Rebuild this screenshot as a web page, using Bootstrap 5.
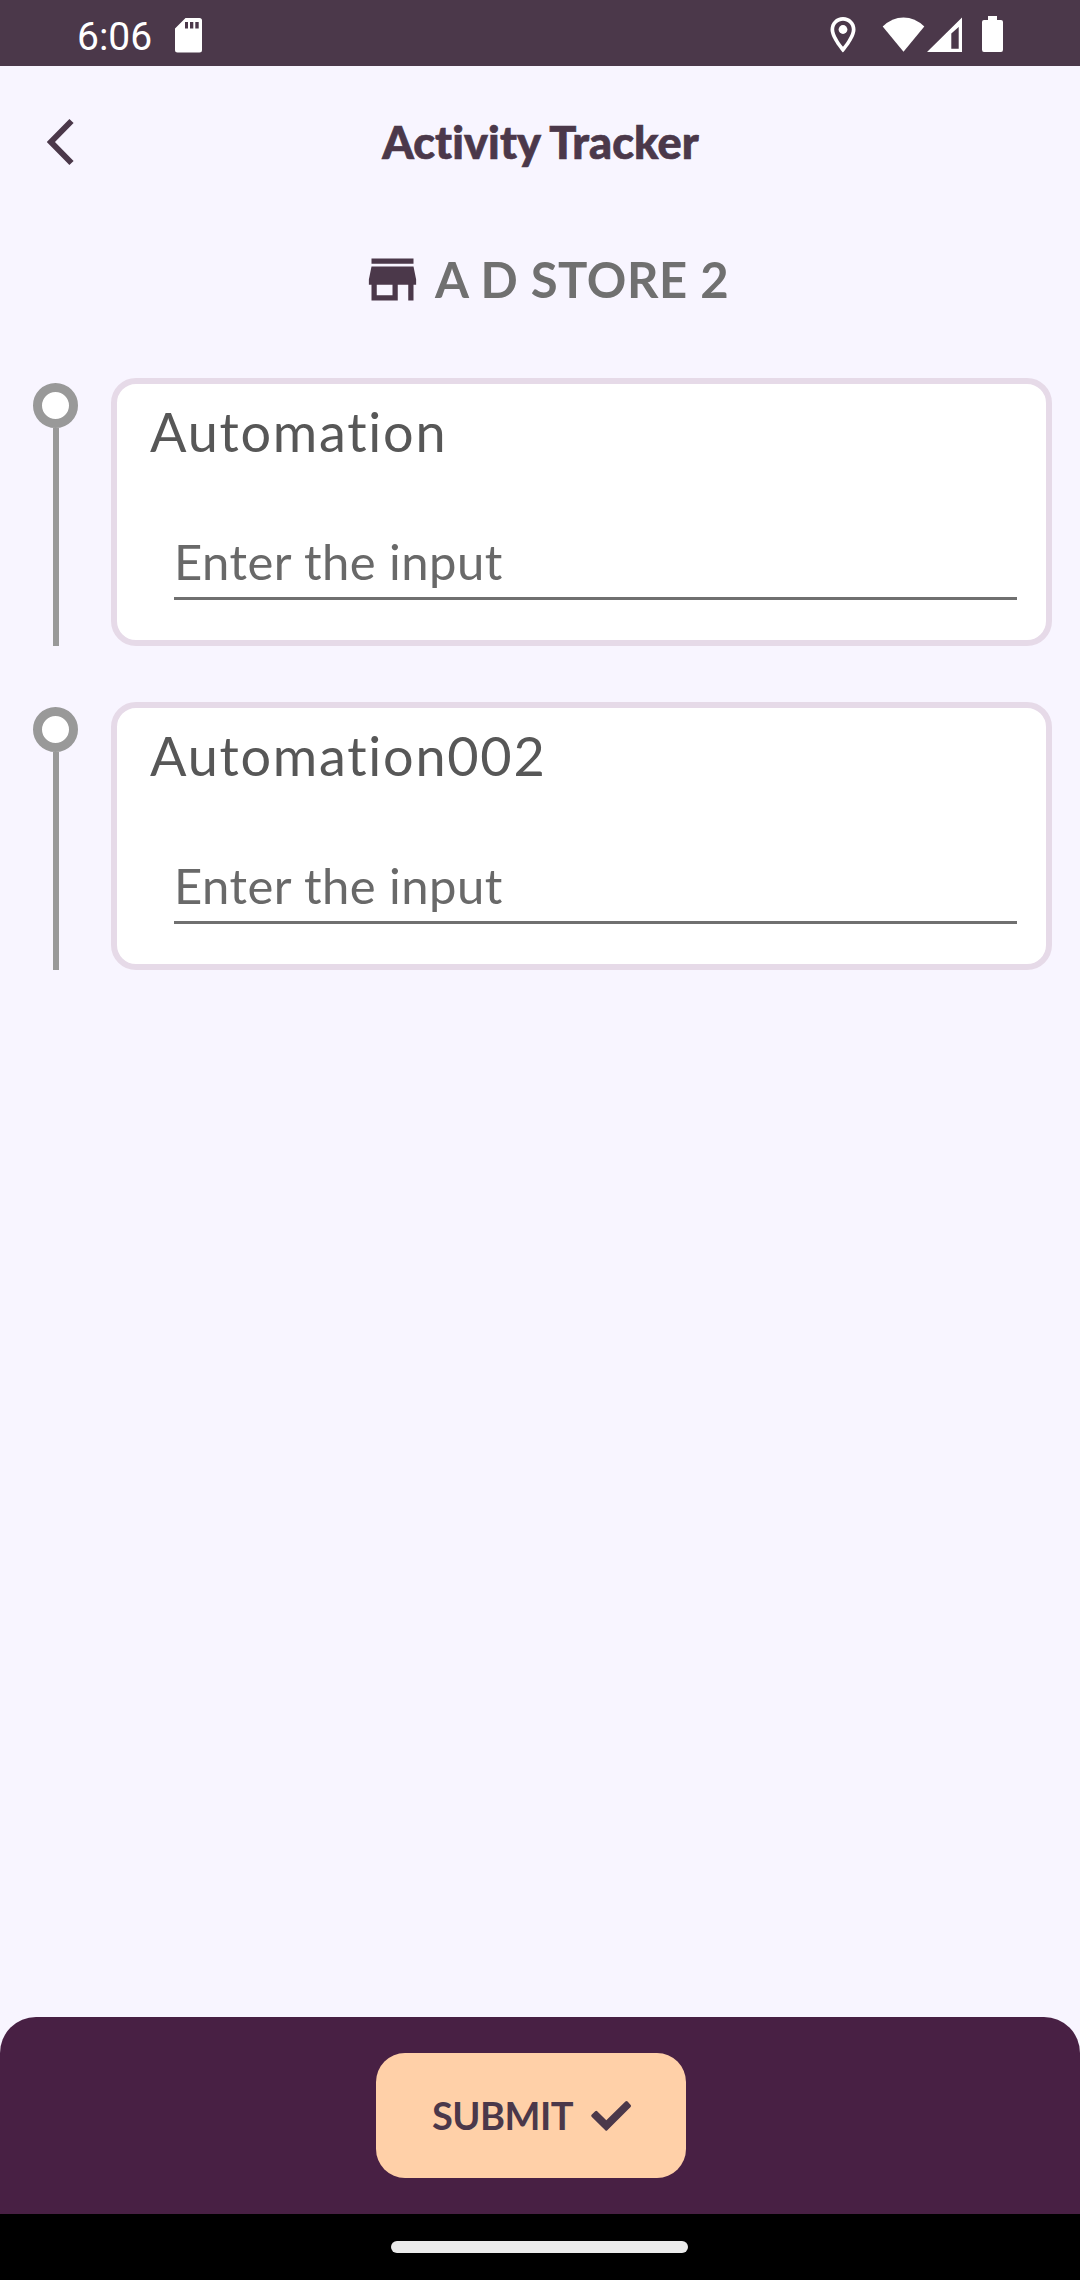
<!DOCTYPE html>
<html lang="en">
<head>
<meta charset="utf-8">
<meta name="viewport" content="width=device-width, initial-scale=1">
<title>Activity Tracker</title>
<link href="https://cdn.jsdelivr.net/npm/bootstrap@5.3.0/dist/css/bootstrap.min.css" rel="stylesheet">
<style>
body{width:1080px;height:2280px;background:#f8f5ff;font-family:Lato,"Open Sans",sans-serif;font-variant-ligatures:none;overflow:hidden}
svg{display:block;flex:none}
.statusbar{height:66px;background:#4b384a;padding:0 76px 0 77px}
.clock{font:400 39px/66px Roboto,sans-serif;padding-top:4px;height:66px;width:98px}
.appbar{height:153px;padding:0 74px 2px 47px}
.appbar h1{font-size:45px;font-weight:900;line-height:60px;color:#4b384a;letter-spacing:.1px;-webkit-text-stroke:.7px #4b384a}
.store{height:123px;padding-top:29px;padding-left:361px}
.store h2{font-size:49px;font-weight:700;line-height:62px;color:#707070;letter-spacing:.55px;padding-left:11px}
.steps{padding-top:36px}
.step{height:268px;margin-bottom:56px;padding-right:28px}
.rail{width:111px;padding:5px 0 0 33px}
.dot{width:45px;height:45px;border:9px solid #999;background:#fff}
.stem{width:6px;margin-left:20px;background:#999}
.panel{border:6px solid #e6dae8;border-radius:25px;padding:16px 29px 0 33px}
.panel label{font-size:54px;line-height:64px;color:#575757;letter-spacing:1.75px}
.answer{height:66px;margin:70px 0 0 24px;padding:0 0 10px;border:0;border-bottom:3px solid #707070;border-radius:0;font-size:49px;line-height:53px;color:#696969;letter-spacing:.45px}
.answer::placeholder{color:#696969;opacity:1}
.actions{height:197px;background:#482044;border-radius:36px 36px 0 0;padding:36px 0 0 376px}
.submit{width:310px;height:125px;border-radius:29px;background:#ffd0a8;color:#4b384a;font-size:38px;font-weight:700;letter-spacing:-.5px;padding:0 54px 0 56px;border:0}
.gesture{height:66px;background:#000;padding-right:2px}
.pill{width:297px;height:12px;background:#ebebeb}
</style>
</head>
<body class="d-flex flex-column">
<div class="statusbar d-flex align-items-start text-white">
  <span class="clock">6:06</span>
  <svg class="mt-3" width="28" height="38" viewBox="175 16 28 38" fill="#fff"><path fill-rule="evenodd" d="M185.500 18H199.500Q202 18 202 20.500V50Q202 52.500 199.500 52.500H177.500Q175 52.500 175 50V28.500ZM185 22V28.500H188V22ZM190 22V28.500H193.300V22ZM195.300 22V28.500H198.700V22Z"/></svg>
  <svg class="ms-auto" width="176" height="66" viewBox="828 0 176 66" fill="#fff"><path fill-rule="evenodd" d="M843 17C836 17 830.500 22.500 830.500 29.500C830.500 38.500 843 52.500 843 52.500S855.500 38.500 855.500 29.500C855.500 22.500 850 17 843 17ZM843 20.700C847.900 20.700 851.800 24.600 851.800 29.500C851.800 34.700 846.600 42.200 843 46.800C839.400 42.200 834.200 34.700 834.200 29.500C834.200 24.600 838.100 20.700 843 20.700Z"/><circle cx="843" cy="29.500" r="4.400"/><path d="M882.700 26.500Q892 17.500 903.500 17.500T924.300 26.500L903.500 51.800Z"/><path fill-rule="evenodd" d="M962 17.500V52H927ZM958.700 27L951.300 33.500V48.700H958.700Z"/><path d="M988 16H997V20H1001Q1003 20 1003 22V49.700Q1003 52 1001 52H984Q982 52 982 49.700V22Q982 20 984 20H988Z"/></svg>
</div>
<header class="appbar d-flex align-items-center">
  <svg width="28" height="48" viewBox="0 0 28 48" fill="none" stroke="#4b384a" stroke-width="5.900"><path d="M24.500 3L3.900 24L24.500 45"/></svg>
  <h1 class="m-0 flex-fill text-center">Activity Tracker</h1>
</header>
<section class="store d-flex align-items-start">
  <svg width="63" height="63" viewBox="0 0 24 24" fill="#4b384a"><path d="M20 4H4v2h16V4zm1 10v-2l-1-5H4l-1 5v2h1v6h10v-6h4v6h2v-6h1zm-9 4H6v-4h6v4z"/></svg>
  <h2 class="mb-0">A D STORE 2</h2>
</section>
<main class="steps flex-fill">
  <div class="step d-flex">
    <div class="rail d-flex flex-column"><span class="dot rounded-circle"></span><span class="stem flex-fill"></span></div>
    <div class="panel bg-white flex-fill"><label class="d-block" for="a1">Automation</label><div class="d-flex"><input class="answer form-control shadow-none" id="a1" placeholder="Enter the input"></div></div>
  </div>
  <div class="step d-flex">
    <div class="rail d-flex flex-column"><span class="dot rounded-circle"></span><span class="stem flex-fill"></span></div>
    <div class="panel bg-white flex-fill"><label class="d-block" for="a2">Automation002</label><div class="d-flex"><input class="answer form-control shadow-none" id="a2" placeholder="Enter the input"></div></div>
  </div>
</main>
<footer class="actions flex-shrink-0">
  <button class="submit btn d-flex align-items-center justify-content-between" type="button"><span>SUBMIT</span><svg width="42" height="32" viewBox="590 2099 42 32" fill="#4b384a"><path d="M627.600 2100.600L630.700 2104Q631.500 2105 630.600 2106L607.300 2129.300Q606.300 2130.300 605.300 2129.300L591.600 2115.700Q590.700 2114.700 591.600 2113.700L595.200 2110.300Q596.200 2109.400 597.200 2110.300L606.300 2119.300L625.400 2100.600Q626.500 2099.600 627.600 2100.600Z"/></svg></button>
</footer>
<div class="gesture d-flex justify-content-center align-items-center flex-shrink-0"><span class="pill rounded-pill"></span></div>
<script src="https://cdn.jsdelivr.net/npm/bootstrap@5.3.0/dist/js/bootstrap.bundle.min.js"></script>
</body>
</html>
